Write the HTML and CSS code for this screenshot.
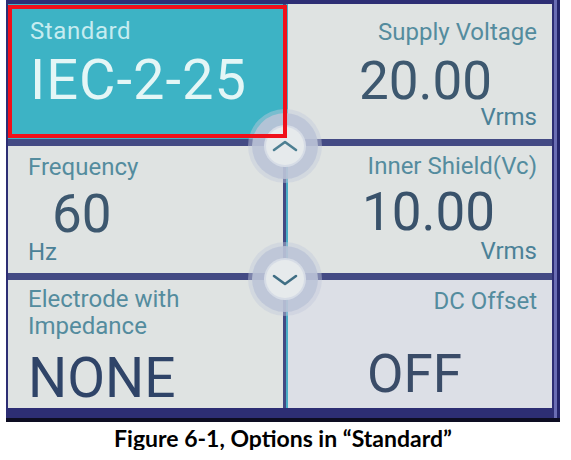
FILE: index.html
```html
<!DOCTYPE html>
<html>
<head>
<meta charset="utf-8">
<link rel="stylesheet" href="styles.css">
</head>
<body>
<div class="screen">
  <div class="grid">
    <div class="cell sel">
      <div class="label std-label">Standard</div>
      <div class="value std-value">IEC-2-25</div>
    </div>
    <div class="cell right c-supply">
      <div class="label">Supply Voltage</div>
      <div class="value">20.00</div>
      <div class="unit">Vrms</div>
    </div>
    <div class="cell c-freq">
      <div class="label">Frequency</div>
      <div class="value">60</div>
      <div class="unit">Hz</div>
    </div>
    <div class="cell right c-shield">
      <div class="label">Inner Shield(Vc)</div>
      <div class="value">10.00</div>
      <div class="unit">Vrms</div>
    </div>
    <div class="cell c-electrode">
      <div class="label two">Electrode with<br>Impedance</div>
      <div class="value big">NONE</div>
    </div>
    <div class="cell right c-dc">
      <div class="label">DC Offset</div>
      <div class="value">OFF</div>
    </div>

    <svg class="knob up" width="76" height="76" viewBox="0 0 76 76">
      <circle cx="38" cy="38" r="37" fill="#c3cadb" opacity="0.45"/>
      <circle cx="38" cy="38" r="33" fill="#bcc4d7" opacity="0.85"/>
      <circle cx="38" cy="38" r="21" fill="#d6dce6"/>
      <circle cx="38" cy="38" r="19" fill="#e6eaec"/>
      <path d="M27 42 L38 34 L49 42" fill="none" stroke="#4d7f92" stroke-width="2.6" stroke-linecap="round" stroke-linejoin="round"/>
    </svg>
    <svg class="knob down" width="76" height="76" viewBox="0 0 76 76">
      <circle cx="38" cy="38" r="37" fill="#c3cadb" opacity="0.45"/>
      <circle cx="38" cy="38" r="33" fill="#bcc4d7" opacity="0.85"/>
      <circle cx="38" cy="38" r="21" fill="#d6dce6"/>
      <circle cx="38" cy="38" r="19" fill="#e6eaec"/>
      <path d="M27 35 L38 43 L49 35" fill="none" stroke="#3f6e84" stroke-width="2.6" stroke-linecap="round" stroke-linejoin="round"/>
    </svg>
    <div class="frame"></div>
  </div>
</div>
<p class="caption">Figure 6-1, Options in “Standard”</p>
</body>
</html>
```
FILE: styles.css
```css
body {
  margin: 0;
  background: #ffffff;
}

.screen {
  margin-left: 6px;
  width: 554px;
  height: 422px;
  box-sizing: border-box;
  padding: 4px 8px 10px 2px;
  background: linear-gradient(to left, #24256a 0 3px, #6a6db4 3px 6px, #2d2e74 6px);
  border-bottom: 4px solid #0d0d22;
}

.grid {
  position: relative;
  display: grid;
  grid-template-columns: 275px 264px;
  grid-template-rows: 135px 127px 128px;
  column-gap: 5px;
  row-gap: 7px;
  height: 404px;
  background: #434a84;
}

.cell {
  display: flex;
  flex-direction: column;
  align-items: flex-start;
  background: #dfe3e2;
  font-family: Roboto, "Noto Sans", sans-serif;
  color: #3c566e;
  box-sizing: border-box;
}

.cell.right {
  align-items: flex-end;
  padding-right: 15px;
  box-shadow: -2px 0 0 #4aaec6;
}

.label,
.unit {
  font-size: 24px;
  line-height: 24px;
  color: #548c9e;
  white-space: nowrap;
}

.unit {
  color: #4b8197;
}

.value {
  font-size: 53px;
  line-height: 53px;
  color: #3d586f;
  white-space: nowrap;
}

/* Standard (selected) */
.sel {
  background: #3db3c5;
  padding: 15px 0 0 22px;
}
.std-label {
  color: #c6ecf0;
  letter-spacing: 0.6px;
}
.std-value {
  font-size: 56px;
  line-height: 56px;
  margin-top: 9px;
  color: #e4f6f6;
  letter-spacing: 1px;
}

/* Supply voltage */
.c-supply {
  padding-top: 16px;
}
.c-supply .value {
  align-self: flex-start;
  margin-left: 71px;
  margin-top: 11px;
}
.c-supply .unit {
  margin-top: -3px;
}

/* Frequency */
.c-freq {
  padding: 9px 0 0 20px;
}
.c-freq .value {
  margin-left: 24px;
  margin-top: 9px;
}
.c-freq .unit {
  margin-top: -1px;
}

/* Inner shield */
.c-shield {
  padding-top: 8px;
}
.c-shield .value {
  align-self: flex-start;
  margin-left: 74px;
  margin-top: 8px;
  color: #39526b;
}
.c-shield .unit {
  margin-top: 0;
}

/* Electrode */
.c-electrode {
  padding: 6px 0 0 20px;
}
.label.two {
  line-height: 27px;
}
.value.big {
  font-size: 55px;
  line-height: 56px;
  margin-top: 10px;
  color: #2f4468;
}

/* DC offset */
.c-dc {
  padding-top: 9px;
  background: #dcdfe6;
}
.c-dc .value {
  align-self: flex-start;
  margin-left: 79px;
  margin-top: 35px;
  color: #3a4c68;
}

/* overlays */
.knob {
  position: absolute;
  left: 239px;
}
.knob.up {
  top: 104px;
}
.knob.down {
  top: 237px;
}

.frame {
  position: absolute;
  left: 0;
  top: 1px;
  width: 279px;
  height: 133px;
  box-sizing: border-box;
  border: 4px solid #f0101a;
}

.caption {
  margin: 5px 0 0 6px;
  width: 554px;
  text-align: center;
  font-family: Lato, "Open Sans", sans-serif;
  font-weight: bold;
  font-size: 23px;
  line-height: 23px;
  color: #000;
}
```
